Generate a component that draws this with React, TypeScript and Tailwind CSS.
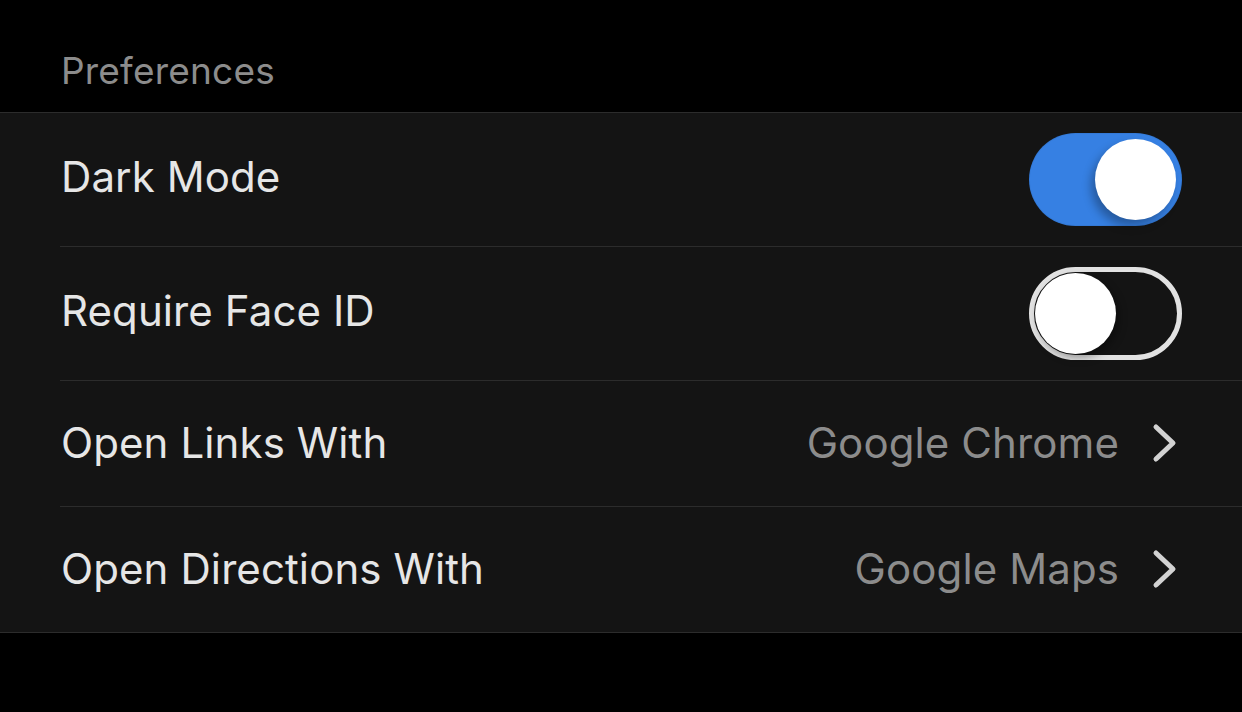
import React from "react";

const font = { fontFamily: "Inter, 'Noto Sans', sans-serif" };

function ToggleOn() {
  return (
    <div className="relative w-[153px] h-[93px] rounded-full bg-[#3680e3] shadow-[inset_0_0_0_1px_rgba(0,0,0,0.05)]">
      <div className="absolute top-[6px] left-[66px] w-[81px] h-[81px] rounded-full bg-white shadow-[-4px_6px_10px_rgba(0,0,0,0.3)]" />
    </div>
  );
}

function ToggleOff() {
  return (
    <div className="relative w-[153px] h-[93px] rounded-full border-[5px] border-[#e2e2e2] bg-[#141414]">
      <div className="absolute top-[1px] left-[1px] w-[81px] h-[81px] rounded-full bg-white shadow-[3px_4px_8px_rgba(0,0,0,0.35)]" />
    </div>
  );
}

function Chevron() {
  return (
    <svg width="26" height="40" viewBox="0 0 26 40" className="ml-[33px] mb-[2px]">
      <polyline points="4,4 21,20 4,36" fill="none" stroke="#d2d2d2" strokeWidth="5" strokeLinecap="round" strokeLinejoin="round" />
    </svg>
  );
}

const label = "text-[42px] text-[#e6e6e6] leading-none pl-[1px] mb-[6px] tracking-[0.1px]";
const label2 = "text-[42px] text-[#e6e6e6] leading-none pl-[1px] mb-[1px] tracking-[0.1px]";
const value = "text-[42px] text-[#8c8c8c] leading-none mb-[1px] tracking-[0.1px]";

export default function App() {
  return (
    <div className="w-[1242px] h-[712px] bg-black overflow-hidden" style={font}>
      <div className="h-[112px] flex items-end pl-[61px] pb-[23px]">
        <span className="text-[37px] text-[#8c8c8c] leading-none tracking-[0.2px]">Preferences</span>
      </div>
      <div className="bg-[#141414] border-y border-[#2c2c2c]">
        <div className="pl-[60px]">
          <div className="h-[134px] flex items-center justify-between pr-[60px] border-b border-[#2c2c2c]">
            <span className={label}>Dark Mode</span>
            <ToggleOn />
          </div>
          <div className="h-[134px] flex items-center justify-between pr-[60px] border-b border-[#2c2c2c]">
            <span className={label}>Require Face ID</span>
            <ToggleOff />
          </div>
          <div className="h-[126px] flex items-center justify-between pr-[64px] border-b border-[#2c2c2c]">
            <span className={label2}>Open Links With</span>
            <div className="flex items-center">
              <span className={value}>Google Chrome</span>
              <Chevron />
            </div>
          </div>
          <div className="h-[125px] flex items-center justify-between pr-[64px]">
            <span className={label2}>Open Directions With</span>
            <div className="flex items-center">
              <span className={value}>Google Maps</span>
              <Chevron />
            </div>
          </div>
        </div>
      </div>
    </div>
  );
}
